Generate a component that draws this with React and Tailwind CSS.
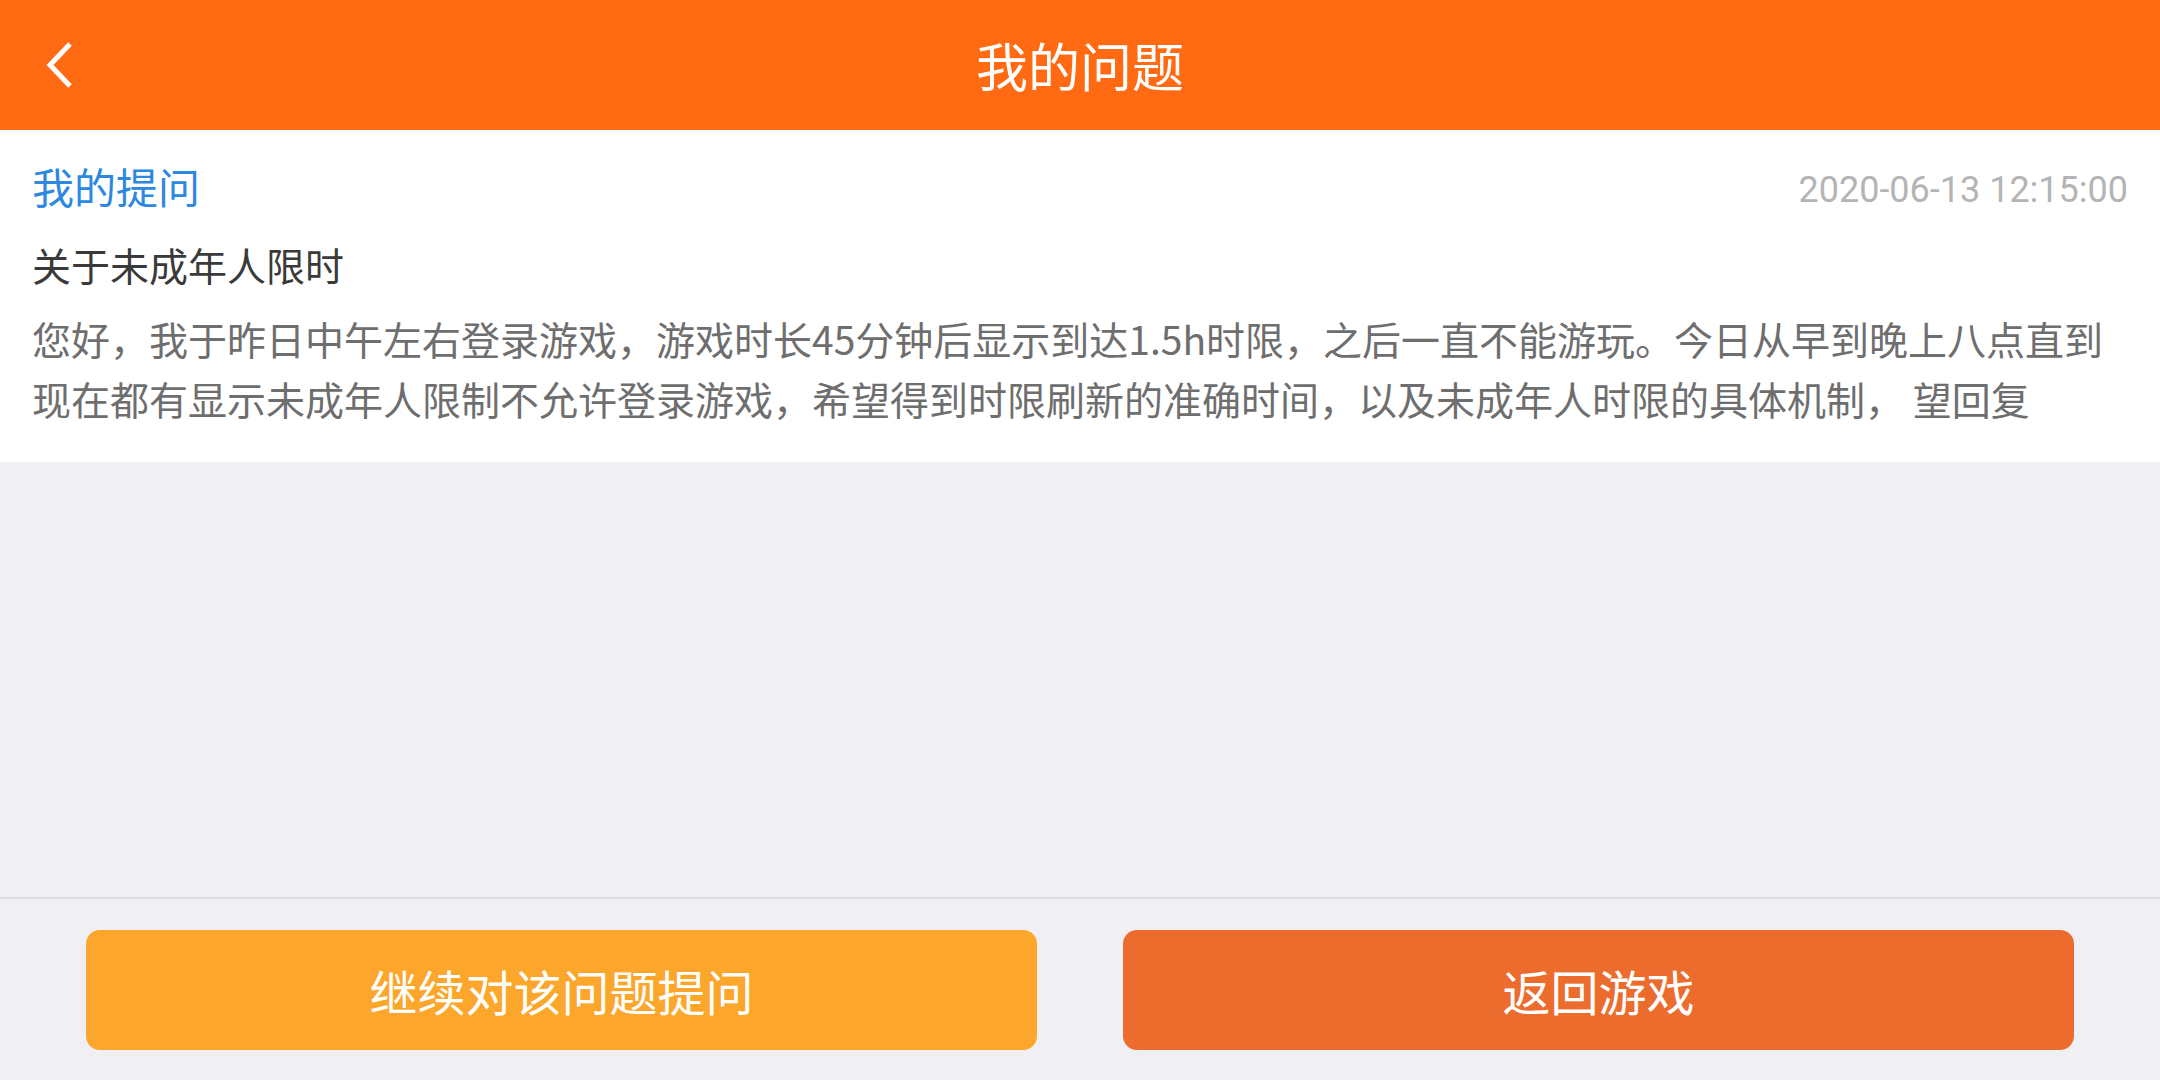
import React from "react";

export default function App() {
  return (
    <div
      className="w-full h-[1080px] flex flex-col bg-[#efeff4] overflow-hidden"
      style={{ fontFamily: '"Noto Sans CJK SC", "Noto Sans", sans-serif' }}
    >
      {/* Header */}
      <div className="relative h-[130px] shrink-0 bg-[#ff6a13] flex items-center justify-center">
        <button className="absolute left-[44px] top-0 h-[130px] flex items-center">
          <svg width="30" height="50" viewBox="0 0 30 50" fill="none">
            <polyline
              points="26,4 6,25 26,46"
              stroke="#ffffff"
              strokeWidth="5"
              strokeLinecap="butt"
              strokeLinejoin="miter"
            />
          </svg>
        </button>
        <div className="text-white text-[52px] leading-[60px]">我的问题</div>
      </div>

      {/* Card */}
      <div className="bg-white px-[32px] pt-[34px] pb-[34px] shrink-0">
        <div className="flex justify-between items-center h-[44px]">
          <div className="text-[#2c88e0] text-[42px] leading-[44px]">我的提问</div>
          <div
            className="text-[#b4b4b4] text-[36px] leading-[44px] translate-y-[4px]"
            style={{ fontFamily: 'Roboto, "Noto Sans", sans-serif' }}
          >
            2020-06-13 12:15:00
          </div>
        </div>
        <div className="mt-[31px] text-[#3a3a3a] text-[39px] leading-[50px]">
          关于未成年人限时
        </div>
        <div className="mt-[19px] text-[#6e6e6e] text-[39px] leading-[60px] whitespace-nowrap">
          您好，我于昨日中午左右登录游戏，游戏时长45分钟后显示到达1.5h时限，之后一直不能游玩。今日从早到晚上八点直到
          <br />
          现在都有显示未成年人限制不允许登录游戏，希望得到时限刷新的准确时间，以及未成年人时限的具体机制， 望回复
        </div>
      </div>

      <div className="flex-1" />

      {/* Bottom bar */}
      <div className="shrink-0 border-t-2 border-[#dedee2] pt-[31px] pb-[30px] px-[86px] flex gap-[86px]">
        <button className="flex-1 h-[120px] rounded-[14px] bg-[#fca62b] text-white text-[48px] flex items-center justify-center">
          继续对该问题提问
        </button>
        <button className="flex-1 h-[120px] rounded-[14px] bg-[#ec6c2e] text-white text-[48px] flex items-center justify-center">
          返回游戏
        </button>
      </div>
    </div>
  );
}
